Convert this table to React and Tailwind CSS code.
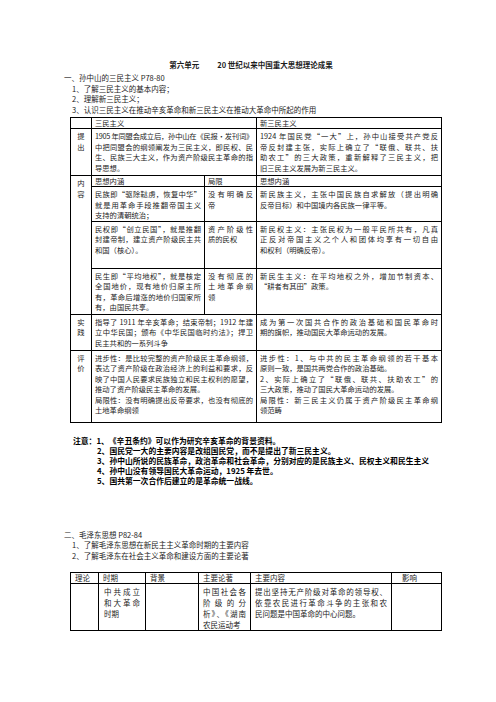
import React from "react";

// each line is its own block so the breaks follow the scan; all but the last line of a paragraph are justified
// a line may be a string or [text, extra classes] for the few lines that need tighter tracking
function Lines({ lines }) {
  return lines.map((l, i) => {
    const [t, extra] = Array.isArray(l) ? l : [l, ""];
    const base = i < lines.length - 1 ? "whitespace-nowrap text-justify [text-align-last:justify]" : "whitespace-nowrap";
    return (
      <div key={i} className={`${base} ${extra}`}>
        {t}
      </div>
    );
  });
}

function Paras({ paras }) {
  return paras.map((p, k) => <Lines key={k} lines={p} />);
}

const cell = "border border-black align-top px-[3px] pt-[2px] leading-[10.5px]";
const label = "border border-black align-top text-center pt-[2px] leading-[10.5px]";
const head = "border border-black px-[3px] leading-[10px]";

function ThreePrinciples() {
  return (
    <table className="table-fixed border-collapse ml-[70px] w-[371px] text-[7.3px]">
      <colgroup>
        <col className="w-[21px]" />
        <col className="w-[113px]" />
        <col className="w-[52px]" />
        <col className="w-[185px]" />
      </colgroup>
      <tbody>
        <tr className="h-[10px]">
          <td className="border border-black" />
          <td colSpan={2} className={head}>三民主义</td>
          <td className={head}>新三民主义</td>
        </tr>
        <tr className="h-[47px]">
          <td className={label}>提<br />出</td>
          <td colSpan={2} className={cell}>
            <Lines lines={[
              ["1905 年同盟会成立后，孙中山在《民报·发刊词》", "tracking-[-0.3px]"],
              "中把同盟会的纲领阐发为三民主义，即民权、民",
              "生、民族三大主义，作为资产阶级民主革命的指",
              "导思想。",
            ]} />
          </td>
          <td className={cell}>
            <Lines lines={[
              "1924 年国民党“一大”上，孙中山接受共产党反",
              "帝反封建主张，实际上确立了“联俄、联共、扶",
              "助农工”的三大政策，重新解释了三民主义，把",
              "旧三民主义发展为新三民主义。",
            ]} />
          </td>
        </tr>
        <tr className="h-[11px]">
          <td rowSpan={4} className={label}>内<br />容</td>
          <td className={head}>思想内涵</td>
          <td className={head}>局限</td>
          <td className={head}>思想内涵</td>
        </tr>
        <tr className="h-[34px]">
          <td className={cell}>
            <Lines lines={["民族即“驱除鞑虏，恢复中华”", "就是用革命手段推翻帝国主义", "支持的清朝统治；"]} />
          </td>
          <td className={cell}>
            <Lines lines={["没有明确反", "帝"]} />
          </td>
          <td className={cell}>
            <Lines lines={["新民族主义，主张中国民族自求解放（提出明确", "反帝目标）和中国境内各民族一律平等。"]} />
          </td>
        </tr>
        <tr className="h-[47px]">
          <td className={cell}>
            <Lines lines={["民权即“创立民国”，就是推翻", "封建帝制，建立资产阶级民主共", "和国（核心）。"]} />
          </td>
          <td className={cell}>
            <Lines lines={["资产阶级性", "质的民权"]} />
          </td>
          <td className={cell}>
            <Lines lines={[
              "新民权主义：主张民权为一般平民所共有，凡真",
              "正反对帝国主义之个人和团体均享有一切自由",
              "和权利（明确反帝）。",
            ]} />
          </td>
        </tr>
        <tr className="h-[46px]">
          <td className={cell}>
            <Lines lines={[
              "民生即“平均地权”，就是核定",
              "全国地价，现有地价归原主所",
              "有，革命后增涨的地价归国家所",
              "有，由国民共享。",
            ]} />
          </td>
          <td className={cell}>
            <Lines lines={["没有彻底的", "土地革命纲", "领"]} />
          </td>
          <td className={cell}>
            <Lines lines={["新民生主义：在平均地权之外，增加节制资本、", "“耕者有其田”政策。"]} />
          </td>
        </tr>
        <tr className="h-[36px]">
          <td className={label}>实<br />践</td>
          <td colSpan={2} className={cell}>
            <Lines lines={[
              "指导了 1911 年辛亥革命；结束帝制；1912 年建",
              "立中华民国；颁布《中华民国临时约法》；捍卫",
              "民主共和的一系列斗争",
            ]} />
          </td>
          <td className={cell}>
            <Lines lines={["成为第一次国共合作的政治基础和国民革命时", "期的旗帜，推动国民大革命运动的发展。"]} />
          </td>
        </tr>
        <tr className="h-[72px]">
          <td className={label}>评<br />价</td>
          <td colSpan={2} className={cell}>
            <Paras paras={[
              [
                "进步性：是比较完整的资产阶级民主革命纲领，",
                "表达了资产阶级在政治经济上的利益和要求，反",
                "映了中国人民要求民族独立和民主权利的愿望，",
                "推动了资产阶级民主革命的发展。",
              ],
              ["局限性：没有明确提出反帝要求，也没有彻底的", "土地革命纲领"],
            ]} />
          </td>
          <td className={cell}>
            <Paras paras={[
              ["进步性：1、与中共的民主革命纲领的若干基本", "原则一致，是国共两党合作的政治基础。"],
              ["2、实际上确立了“联俄、联共、扶助农工”的", "三大政策，推动了国民大革命运动的发展。"],
              ["局限性：新三民主义仍属于资产阶级民主革命纲", "领范畴"],
            ]} />
          </td>
        </tr>
      </tbody>
    </table>
  );
}

function MaoTable() {
  const th = "border border-black px-[4px] leading-[10px] font-normal text-left";
  const td = "border border-black align-top px-[4px] pt-[2px] leading-[11px]";
  return (
    <table className="table-fixed border-collapse ml-[70px] w-[371px] text-[7.5px]">
      <colgroup>
        <col className="w-[28px]" />
        <col className="w-[47px]" />
        <col className="w-[53px]" />
        <col className="w-[52px]" />
        <col className="w-[141px]" />
        <col className="w-[50px]" />
      </colgroup>
      <thead>
        <tr className="h-[11px]">
          <th className={th}>理论</th>
          <th className={th}>时期</th>
          <th className={th}>背景</th>
          <th className={th}>主要论著</th>
          <th className={th}>主要内容</th>
          <th className="border border-black pl-[10px] leading-[10px] font-normal text-left">影响</th>
        </tr>
      </thead>
      <tbody>
        <tr className="h-[46px]">
          <td className={td} />
          <td className="border border-black align-top px-[5px] pt-[2px] leading-[11px]">
            <Lines lines={["中共成立", "和大革命", "时期"]} />
          </td>
          <td className={td} />
          <td className={td}>
            <Lines lines={["中国社会各", "阶级的分", "析》、《湖南", "农民运动考"]} />
          </td>
          <td className={td}>
            <Lines lines={[
              "提出坚持无产阶级对革命的领导权、",
              "依靠农民进行革命斗争的主张和农",
              "民问题是中国革命的中心问题。",
            ]} />
          </td>
          <td className={td} />
        </tr>
      </tbody>
    </table>
  );
}

export default function App() {
  return (
    <div className="w-[496px] min-h-[702px] bg-white text-[#1c1c1c] font-['Noto_Sans_CJK_SC','Noto_Sans',sans-serif] pt-[59px]">
      <h1 className="flex justify-center gap-[18px] text-[7.5px] leading-[12px] font-bold pl-[6px]">
        <span>第六单元</span>
        <span>20 世纪以来中国重大思想理论成果</span>
      </h1>

      <div className="mt-[2px] text-[7.5px] leading-[10.6px]">
        <div className="pl-[64px]">一、孙中山的三民主义 P78-80</div>
        <div className="pl-[72px]">1、了解三民主义的基本内容；</div>
        <div className="pl-[72px]">2、理解新三民主义；</div>
        <div className="pl-[72px]">3、认识三民主义在推动辛亥革命和新三民主义在推动大革命中所起的作用</div>
      </div>

      <div className="mt-[2px]">
        <ThreePrinciples />
      </div>

      {/* 注意 */}
      <div className="mt-[13px] text-[7.8px] leading-[10px] font-bold text-black">
        <div className="pl-[73px]">注意：1、《辛丑条约》可以作为研究辛亥革命的背景资料。</div>
        <div className="pl-[97px]">2、国民党一大的主要内容是改组国民党，而不是提出了新三民主义。</div>
        <div className="pl-[97px]">3、孙中山所说的民族革命，政治革命和社会革命，分别对应的是民族主义、民权主义和民生主义</div>
        <div className="pl-[97px]">4、孙中山没有领导国民大革命运动，1925 年去世。</div>
        <div className="pl-[97px]">5、国共第一次合作后建立的是革命统一战线。</div>
      </div>

      <div className="mt-[44px] text-[7.5px] leading-[10.5px]">
        <div className="pl-[64px]">二、毛泽东思想 P82-84</div>
        <div className="pl-[72px]">1、了解毛泽东思想在新民主主义革命时期的主要内容</div>
        <div className="pl-[72px]">2、了解毛泽东在社会主义革命和建设方面的主要论著</div>
      </div>

      <div className="mt-[11px]">
        <MaoTable />
      </div>
    </div>
  );
}
